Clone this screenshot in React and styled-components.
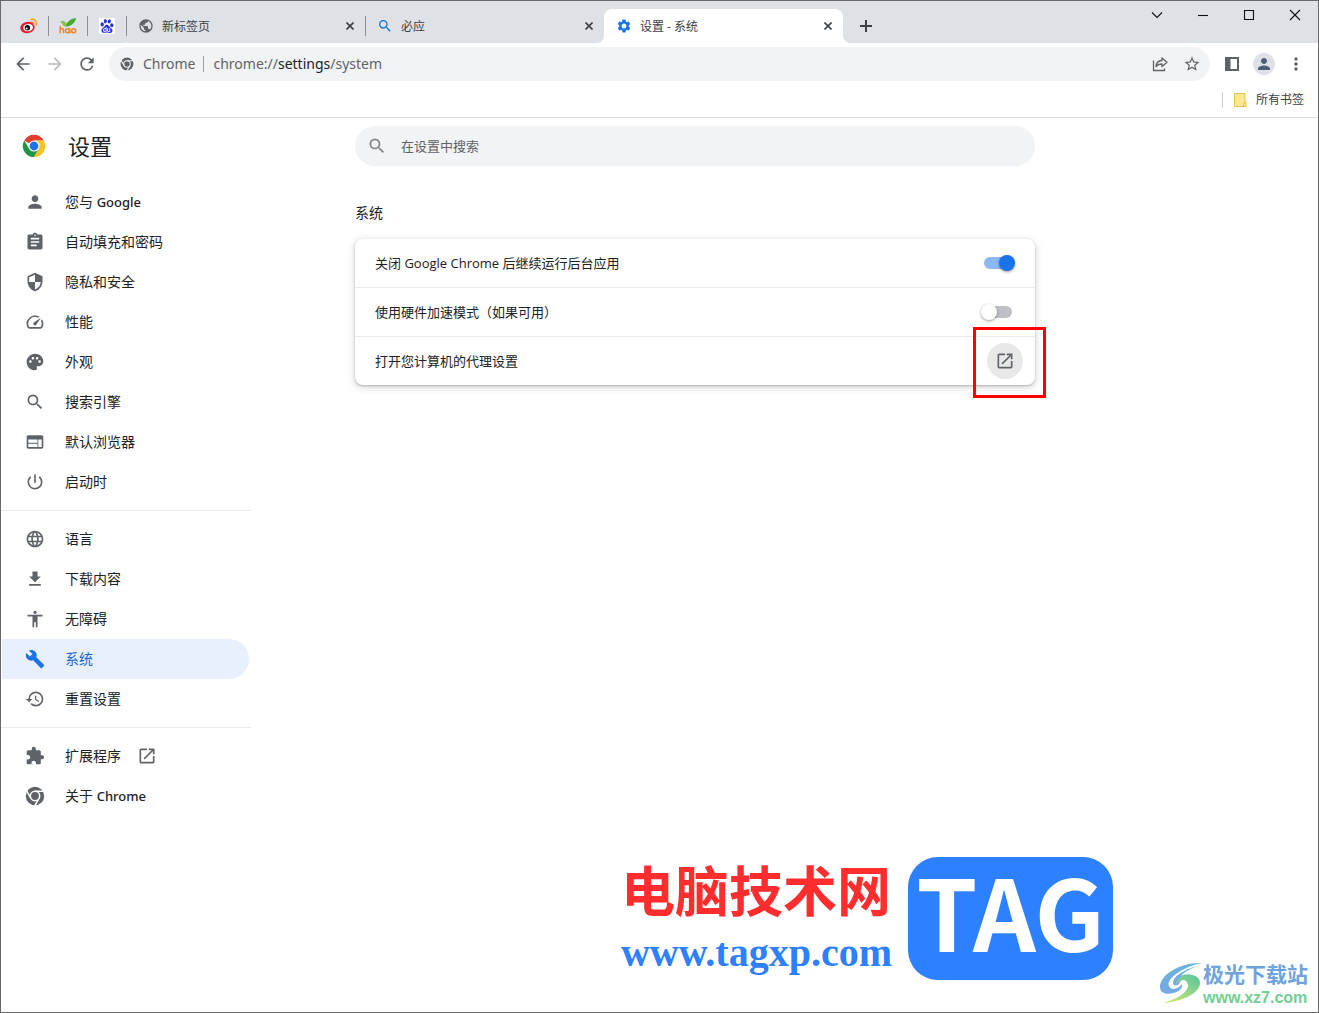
import styled, { createGlobalStyle, css } from "styled-components"
import {
    MdPerson, MdAssignment, MdSecurity, MdSpeed, MdPalette, MdSearch, MdWeb,
    MdPowerSettingsNew, MdLanguage, MdGetApp, MdAccessibility, MdBuild,
    MdExtension, MdOpenInNew, MdPublic, MdSettings,
    MdArrowBack, MdArrowForward, MdRefresh, MdStarBorder, MdMoreVert, MdRestore
} from "react-icons/md"
import { SiBaidu } from "react-icons/si"

const GlobalStyle = createGlobalStyle`
    * {
        box-sizing: border-box;
    }
    body {
        margin: 0;
        font-family: "Open Sans", "Noto Sans CJK SC", sans-serif;
        color: #202124;
        background: #fff;
    }
    button {
        border: 0;
        padding: 0;
        background: none;
        font: inherit;
        color: inherit;
    }
    svg {
        display: block;
        flex: none;
    }
`

const Window = styled.div`
    position: relative;
    min-height: 100vh;
    border: 1px solid #69696b;
    overflow: hidden;
`

/* tab strip */
const TabStrip = styled.header`
    display: flex;
    height: 42px;
    padding-left: 8px;
    background: #dee1e6;
`
const Tabs = styled.div`
    display: flex;
    flex: 1;
    min-width: 0;
    padding-top: 8px;
`
const leftLine = css`
    background: linear-gradient(#8b8e93, #8b8e93) left center / 1px 20px no-repeat;
`
const PinnedTab = styled.button`
    display: grid;
    place-items: center;
    flex: none;
    width: 39px;
    height: 34px;
    ${props => props.$line && leftLine}
`
const Tab = styled.div`
    display: flex;
    align-items: center;
    gap: 8px;
    flex: 0 1 239px;
    height: 34px;
    padding: 0 7px 0 12px;
    font-size: 12px;
    line-height: 16px;
    color: #3c4043;
    ${props => props.$line && leftLine}
    ${props => props.$active && css`
        position: relative;
        background: #fff;
        border-radius: 8px 8px 0 0;
        &::before,
        &::after {
            content: "";
            position: absolute;
            bottom: 0;
            width: 8px;
            height: 8px;
        }
        &::before {
            left: -8px;
            background: radial-gradient(circle at 0 0, transparent 8px, #fff 8px);
        }
        &::after {
            right: -8px;
            background: radial-gradient(circle at 100% 0, transparent 8px, #fff 8px);
        }
    `}
`
const TabTitle = styled.span`
    flex: 1;
    padding-top: 2px;
    white-space: nowrap;
    overflow: hidden;
`
const SmallButton = styled.button`
    display: grid;
    place-items: center;
    width: 16px;
    height: 16px;
    color: #3c4043;
`
const NewTab = styled.button`
    display: grid;
    place-items: center;
    width: 28px;
    height: 34px;
    margin-left: 9px;
    color: #3c4043;
`
const WindowButton = styled.button`
    display: grid;
    place-items: center;
    width: 46px;
    height: 28px;
`

/* toolbar */
const Toolbar = styled.div`
    display: flex;
    align-items: center;
    height: 42px;
    padding: 0 6px;
`
const ToolButton = styled.button`
    display: grid;
    place-items: center;
    flex: none;
    width: 32px;
    height: 32px;
    color: ${props => props.$muted ? "#babcbe" : "#5f6368"};
`
const Omnibox = styled.div`
    display: flex;
    align-items: center;
    flex: 1;
    height: 34px;
    margin: 0 6px;
    padding: 0 2px 0 11px;
    border-radius: 17px;
    background: #f1f3f4;
    color: #5f6368;
    font-family: "Noto Sans", "Noto Sans CJK SC", sans-serif;
    font-size: 14px;
    line-height: 20px;
`
const SiteName = styled.span`
    margin-left: 9px;
    padding-right: 8px;
    line-height: 16px;
    border-right: 1px solid #9aa0a6;
`
const Address = styled.div`
    flex: 1;
    margin-left: 9px;
    b {
        font-weight: 400;
        color: #202124;
    }
`
const Avatar = styled.span`
    display: grid;
    place-items: center;
    width: 22px;
    height: 22px;
    border-radius: 50%;
    background: #dee1e6;
    color: #505f79;
`
const Bookmarks = styled.div`
    display: flex;
    align-items: center;
    justify-content: flex-end;
    height: 33px;
    padding: 0 14px 3px 0;
    border-bottom: 1px solid #dadce0;
`
const BookmarkFolder = styled.button`
    display: flex;
    align-items: center;
    gap: 9px;
    height: 16px;
    padding-left: 11px;
    border-left: 1px solid #cdcfd2;
    font-size: 12px;
    line-height: 16px;
    color: #3c4043;
`

/* settings page */
const Page = styled.div`
    display: grid;
    grid-template-columns: 250px 1fr;
`
const Sidebar = styled.aside``
const Brand = styled.div`
    display: flex;
    align-items: center;
    gap: 22px;
    height: 56px;
    padding-left: 21px;
`
const Title = styled.h1`
    margin: 0;
    font-size: 22px;
    line-height: 32px;
    font-weight: 400;
`
const Nav = styled.nav`
    padding-top: 8px;
`
const NavItem = styled.a`
    display: flex;
    align-items: center;
    gap: 20px;
    height: 40px;
    margin: 0 2px 0 1px;
    padding-left: 23px;
    border-radius: 0 20px 20px 0;
    font-size: 14px;
    line-height: 20px;
    text-decoration: none;
    color: ${props => props.$active ? "#1967d2" : "#202124"};
    background: ${props => props.$active ? "#e8f0fe" : "none"};
    svg {
        color: ${props => props.$active ? "#1a73e8" : "#5f6368"};
    }
    span {
        margin-right: -4px;
    }
`
const Latin = styled.b`
    font-family: "Noto Sans", sans-serif;
    font-size: 13px;
    font-weight: 500;
`
const Separator = styled.hr`
    height: 1px;
    margin: 8px 0;
    border: 0;
    background: #e8eaed;
`
const Main = styled.main`
    max-width: 784px;
    padding: 8px 0 0 104px;
`
const SearchBox = styled.label`
    display: flex;
    align-items: center;
    gap: 14px;
    height: 40px;
    padding: 0 12px;
    border-radius: 20px;
    background: #f1f3f4;
    color: #80868b;
`
const SearchInput = styled.input`
    flex: 1;
    border: 0;
    padding: 0;
    outline: 0;
    background: none;
    font: inherit;
    font-size: 13px;
    line-height: 20px;
    &::placeholder {
        color: #5f6368;
        opacity: 1;
    }
`
const SectionTitle = styled.h2`
    margin: 37px 0 16px;
    font-size: 14px;
    line-height: 20px;
    font-weight: 400;
`
const Card = styled.section`
    border-radius: 8px;
    background: #fff;
    box-shadow: 0 1px 2px rgba(60, 64, 67, .3), 0 2px 6px 2px rgba(60, 64, 67, .15);
`
const Row = styled.div`
    display: flex;
    align-items: center;
    justify-content: space-between;
    height: 48px;
    padding: 0 ${props => props.$tight ? "12px" : "20px"} 0 20px;
    font-size: 13px;
    line-height: 20px;
    & + & {
        height: 49px;
        border-top: 1px solid #ebebeb;
    }
`
const Toggle = styled.input`
    appearance: none;
    display: flex;
    align-items: center;
    width: 34px;
    height: 16px;
    margin: 0;
    &::before {
        content: "";
        width: 28px;
        height: 12px;
        margin-left: 3px;
        border-radius: 6px;
        background: #bdc1c6;
    }
    &::after {
        content: "";
        width: 16px;
        height: 16px;
        margin-left: -31px;
        border-radius: 50%;
        background: #fff;
        box-shadow: 0 1px 3px rgba(0, 0, 0, .4);
    }
    &:checked::before {
        background: #8cb8f5;
    }
    &:checked::after {
        margin-left: -13px;
        background: #1a73e8;
    }
`
const LaunchButton = styled.button`
    position: relative;
    display: grid;
    place-items: center;
    width: 36px;
    height: 36px;
    border-radius: 50%;
    background: #e8e8e8;
    color: #5f6368;
`
const Highlight = styled.span`
    position: absolute;
    inset: -16px -23px -19px -14px;
    border: 3px solid #f00;
`

/* marks stamped over the window */
const SiteMark = styled.div`
    position: absolute;
    right: 205px;
    bottom: 24px;
    display: flex;
    align-items: center;
    gap: 16px;
    white-space: nowrap;
`
const SiteMarkText = styled.div`
    padding-top: 12px;
`
const SiteMarkName = styled.div`
    font: 700 54px/58px "Noto Sans CJK SC", sans-serif;
    color: #ff2d2d;
`
const SiteMarkUrl = styled.div`
    font: 700 40px/70px "Liberation Serif", serif;
    color: #2d80ff;
`
const SiteMarkBadge = styled.div`
    width: 205px;
    height: 123px;
    border-radius: 30px;
    background: #2d80ff;
    color: #fff;
    text-align: center;
    font: 700 98px/104px "Noto Sans CJK SC", sans-serif;
`
const CornerMark = styled.div`
    position: absolute;
    right: 10px;
    bottom: 4px;
    display: flex;
    align-items: center;
    white-space: nowrap;
`
const CornerName = styled.div`
    font: 700 21px/30px "Noto Sans CJK SC", sans-serif;
    color: #6fa3db;
`
const CornerUrl = styled.div`
    font: 700 16px/20px "Liberation Sans", sans-serif;
    color: #72cf94;
`

const WeiboIcon = () => (
    <svg width="18" height="16" viewBox="0 0 18 16">
        <ellipse cx="7.5" cy="9.5" rx="7.2" ry="5.6" fill="#e6162d" transform="rotate(-8 7.5 9.5)" />
        <ellipse cx="8" cy="9.6" rx="5" ry="3.7" fill="#fff" transform="rotate(-8 8 9.6)" />
        <circle cx="7.4" cy="9.8" r="2.7" fill="#111" />
        <circle cx="6.600" cy="10.600" r="1" fill="#fff" />
        <path d="M11 1.400c4-.8 6.400 2.200 5.200 5.600M11.300 4c1.800-.3 2.800.8 2.300 2.500" fill="none" stroke="#f59a1b" strokeWidth="1.400" strokeLinecap="round" />
    </svg>
)

const HaoIcon = () => (
    <svg width="18" height="16" viewBox="0 0 18 16">
        <path d="M2 3c3 0 4.500 1 5.500 3C10 2 13 .6 17 0c-.5 4-4 8-9.500 8.600C5 8.500 2.800 6.500 2 3z" fill="#45a832" />
        <path d="M2 3c3 0 4.500 1 5.500 3l-.5 2.500C4.500 8 2.800 6.500 2 3z" fill="#8cc63f" />
        <g fill="none" stroke="#f08326" strokeWidth="1.500" strokeLinecap="round">
            <path d="M1.200 8.500v6.300M1.200 12c.8-2 3.300-2 3.300 0v2.800" />
            <circle cx="8.500" cy="12.700" r="2" />
            <path d="M10.700 10.800v4" />
            <circle cx="14.700" cy="12.700" r="2" />
        </g>
    </svg>
)

const BaiduIcon = () => (
    <svg width="16" height="16" viewBox="0 0 16 16">
        <rect width="16" height="16" rx="1" fill="#fff" />
        <SiBaidu x="1" y="1" size={14} color="#2932e1" />
    </svg>
)

const ChromeLogo = () => (
    <svg width="24" height="24" viewBox="0 0 48 48">
        <path d="M24 24L4.600 12.800A22.400 22.400 0 0 1 43.400 12.800H24z" fill="#e33b2e" />
        <path d="M4.600 12.800A22.400 22.400 0 0 0 24 46.400l9.700-16.800L24 24 14.300 29.600z" fill="#1e9648" />
        <path d="M43.400 12.800A22.400 22.400 0 0 1 24 46.400l9.700-16.800L24 12.800z" fill="#fcc31e" />
        <circle cx="24" cy="24" r="11.200" fill="#fff" />
        <circle cx="24" cy="24" r="8.800" fill="#1a73e8" />
    </svg>
)

const ChromeIcon = ({ size, gap = "#fff" }) => (
    <svg width={size} height={size} viewBox="0 0 20 20">
        <circle cx="10" cy="10" r="9.200" fill="currentColor" />
        <g fill="none" stroke={gap} strokeWidth="1.500">
            <circle cx="10" cy="10" r="4.700" />
            <path d="M10 5.300h9.500M14.070 12.350L9.300 20.600M5.930 12.350L1.200 4.100" />
        </g>
    </svg>
)

const CloseIcon = () => (
    <svg width="8" height="8" viewBox="0 0 8 8" fill="none" stroke="currentColor" strokeWidth="1.600">
        <path d="M.5.5l7 7M7.500.5l-7 7" />
    </svg>
)

const PlusIcon = () => (
    <svg width="12" height="12" viewBox="0 0 12 12" fill="none" stroke="currentColor" strokeWidth="2">
        <path d="M6 0v12M0 6h12" />
    </svg>
)

const ShareIcon = () => (
    <svg width="16" height="16" viewBox="0 0 16 16" fill="none" stroke="currentColor" strokeWidth="1.300">
        <path d="M1.500 4.500v10h11v-2" />
        <path d="M4 10.500c.3-3.800 2.500-5.800 6-6V2l5 4.300-5 4.200V8c-2.600 0-4.500.6-6 2.500z" strokeLinejoin="round" />
    </svg>
)

const SidePanelIcon = () => (
    <svg width="14" height="14" viewBox="0 0 14 14">
        <path d="M0 0h14v14H0zM5.500 2v10H12V2z" fill="currentColor" fillRule="evenodd" />
    </svg>
)

const FolderIcon = () => (
    <svg width="13" height="14" viewBox="0 0 13 14">
        <path d="M.5.5h10.500v9h1v4H.5z" fill="#ffe694" stroke="#e8c33f" />
        <path d="M9.500 13.500V10.500q0-1 1.500-1" fill="none" stroke="#e8c33f" />
    </svg>
)

const CaptionIcon = ({ d }) => (
    <svg width="12" height="12" viewBox="0 0 12 12" fill="none" stroke="#111" strokeWidth="1.100">
        <path d={d} />
    </svg>
)

const SwooshIcon = () => (
    <svg width="43" height="42" viewBox="0 0 43 42">
        <defs>
            <linearGradient id="sky" x1="1" y1="0" x2="0" y2="1">
                <stop offset="0" stopColor="#63b9d4" />
                <stop offset="1" stopColor="#76a8e6" />
            </linearGradient>
            <linearGradient id="leaf" x1="1" y1="0" x2="0" y2="1">
                <stop offset="0" stopColor="#55c4a0" />
                <stop offset="1" stopColor="#dceb68" />
            </linearGradient>
        </defs>
        <path d="M42 1C20 0 0 13 0 25c0 6 6 8 13 6 6-1 10-5 9-9-3 5-11 7-13 2C6 17 22 5 42 1z" fill="url(#sky)" />
        <path d="M37 4C24 8 13 14 13 21c0 3 4 3 6 1 1-3 3-5 7-4l3-5c-3-1-6 0-8 1 3-4 9-7 16-10z" fill="url(#sky)" />
        <path d="M25 13c8-2 15 2 15 8C40 31 22 40 2 41c12-3 25-9 26-17 0-4-3-7-7-6-3 1-4 3-5 5 0-4 3-8 9-10z" fill="url(#leaf)" />
    </svg>
)

const menuGroups = [
    [
        { icon: MdPerson, label: "您与 ", latin: "Google" },
        { icon: MdAssignment, label: "自动填充和密码" },
        { icon: MdSecurity, label: "隐私和安全" },
        { icon: MdSpeed, label: "性能" },
        { icon: MdPalette, label: "外观" },
        { icon: MdSearch, label: "搜索引擎" },
        { icon: MdWeb, label: "默认浏览器" },
        { icon: MdPowerSettingsNew, label: "启动时" },
    ],
    [
        { icon: MdLanguage, label: "语言" },
        { icon: MdGetApp, label: "下载内容" },
        { icon: MdAccessibility, label: "无障碍" },
        { icon: MdBuild, label: "系统", active: true },
        { icon: MdRestore, label: "重置设置" },
    ],
    [
        { icon: MdExtension, label: "扩展程序", external: true },
        { icon: ChromeIcon, label: "关于 ", latin: "Chrome" },
    ],
]

const MenuGroup = ({ items, divided }) => (
    <>
        {divided && <Separator />}
        {items.map(({ icon: Icon, label, latin, active, external }) => (
            <NavItem key={label} href="#" $active={active}>
                <Icon size={20} />
                <span>{label}{latin && <Latin>{latin}</Latin>}</span>
                {external && <MdOpenInNew size={20} />}
            </NavItem>
        ))}
    </>
)

const BrowserTab = ({ icon, title, active, line }) => (
    <Tab $active={active} $line={line}>
        {icon}
        <TabTitle>{title}</TabTitle>
        <SmallButton aria-label="关闭"><CloseIcon /></SmallButton>
    </Tab>
)

const App = () => {
    return (
        <Window>
            <GlobalStyle />
            <TabStrip>
                <Tabs>
                    <PinnedTab aria-label="微博"><WeiboIcon /></PinnedTab>
                    <PinnedTab aria-label="hao" $line><HaoIcon /></PinnedTab>
                    <PinnedTab aria-label="百度" $line><BaiduIcon /></PinnedTab>
                    <BrowserTab icon={<MdPublic size={16} color="#5f6368" />} title="新标签页" line />
                    <BrowserTab icon={<MdSearch size={16} color="#1a78d0" />} title="必应" line />
                    <BrowserTab icon={<MdSettings size={16} color="#1a73e8" />} title="设置 - 系统" active />
                    <NewTab aria-label="新标签页"><PlusIcon /></NewTab>
                </Tabs>
                <WindowButton aria-label="搜索标签页"><CaptionIcon d="M1 3.500l5 5 5-5" /></WindowButton>
                <WindowButton aria-label="最小化"><CaptionIcon d="M1 6.500h10" /></WindowButton>
                <WindowButton aria-label="最大化"><CaptionIcon d="M1.500 1.500h9v9h-9z" /></WindowButton>
                <WindowButton aria-label="关闭窗口"><CaptionIcon d="M1 1l10 10M11 1L1 11" /></WindowButton>
            </TabStrip>

            <Toolbar>
                <ToolButton aria-label="后退"><MdArrowBack size={20} /></ToolButton>
                <ToolButton aria-label="前进" $muted><MdArrowForward size={20} /></ToolButton>
                <ToolButton aria-label="重新加载"><MdRefresh size={20} /></ToolButton>
                <Omnibox>
                    <ChromeIcon size={14} gap="#f1f3f4" />
                    <SiteName>Chrome</SiteName>
                    <Address>chrome://<b>settings</b>/system</Address>
                    <ToolButton aria-label="分享"><ShareIcon /></ToolButton>
                    <ToolButton aria-label="加入书签"><MdStarBorder size={18} /></ToolButton>
                </Omnibox>
                <ToolButton aria-label="侧边栏"><SidePanelIcon /></ToolButton>
                <ToolButton aria-label="用户"><Avatar><MdPerson size={18} /></Avatar></ToolButton>
                <ToolButton aria-label="更多"><MdMoreVert size={20} /></ToolButton>
            </Toolbar>
            <Bookmarks>
                <BookmarkFolder><FolderIcon />所有书签</BookmarkFolder>
            </Bookmarks>

            <Page>
                <Sidebar>
                    <Brand>
                        <ChromeLogo />
                        <Title>设置</Title>
                    </Brand>
                    <Nav>
                        {menuGroups.map((items, i) => (
                            <MenuGroup key={i} items={items} divided={i > 0} />
                        ))}
                    </Nav>
                </Sidebar>
                <Main>
                    <SearchBox>
                        <MdSearch size={20} />
                        <SearchInput type="search" placeholder="在设置中搜索" />
                    </SearchBox>
                    <SectionTitle>系统</SectionTitle>
                    <Card>
                        <Row>
                            <label htmlFor="background">关闭 Google Chrome 后继续运行后台应用</label>
                            <Toggle id="background" type="checkbox" defaultChecked />
                        </Row>
                        <Row>
                            <label htmlFor="hardware">使用硬件加速模式（如果可用）</label>
                            <Toggle id="hardware" type="checkbox" />
                        </Row>
                        <Row $tight>
                            <span id="proxy">打开您计算机的代理设置</span>
                            <LaunchButton aria-labelledby="proxy">
                                <MdOpenInNew size={20} />
                                <Highlight />
                            </LaunchButton>
                        </Row>
                    </Card>
                </Main>
            </Page>

            <SiteMark>
                <SiteMarkText>
                    <SiteMarkName>电脑技术网</SiteMarkName>
                    <SiteMarkUrl>www.tagxp.com</SiteMarkUrl>
                </SiteMarkText>
                <SiteMarkBadge>TAG</SiteMarkBadge>
            </SiteMark>
            <CornerMark>
                <SwooshIcon />
                <div>
                    <CornerName>极光下载站</CornerName>
                    <CornerUrl>www.xz7.com</CornerUrl>
                </div>
            </CornerMark>
        </Window>
    )
}

export default App
